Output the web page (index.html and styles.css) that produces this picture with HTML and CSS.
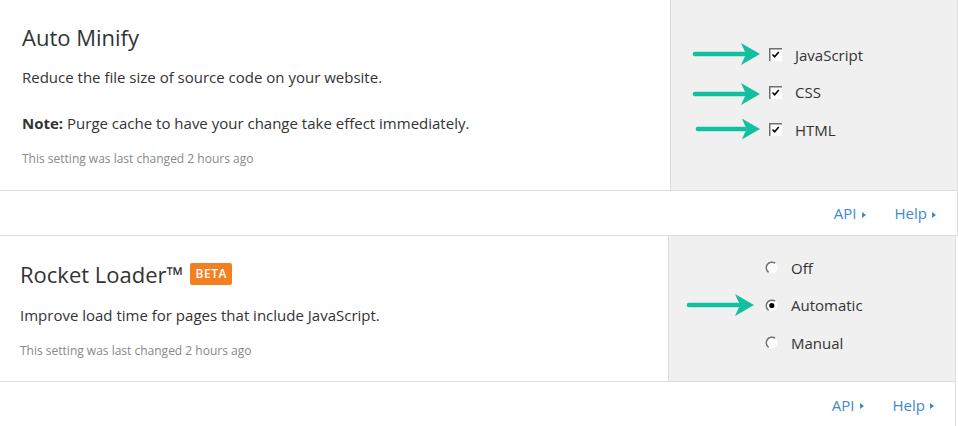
FILE: index.html
```html
<!DOCTYPE html>
<html lang="en">
<head>
<meta charset="utf-8">
<title>Settings</title>
<link rel="stylesheet" href="styles.css">
</head>
<body>
<section class="card">
  <div class="setting">
    <div class="setting-main">
      <h2 class="setting-title">Auto Minify</h2>
      <p class="setting-desc">Reduce the file size of source code on your website.</p>
      <p class="setting-note"><strong>Note:</strong> Purge cache to have your change take effect immediately.</p>
      <p class="setting-meta">This setting was last changed 2 hours ago</p>
    </div>
    <div class="setting-control control-checks">
      <label class="option">
        <svg class="pointer p1" viewBox="0 0 68 24" width="68" height="24"><path d="M3 12H52" class="shaft"/><polygon points="49,1 68,12 49,23 54,12" class="head"/></svg>
        <svg class="check" viewBox="0 0 13 13" width="13" height="13"><rect x="0" y="0" width="13" height="13" fill="#fff"/><path d="M0.75 13V0.75H13" fill="none" stroke="#6f6f6f" stroke-width="1.5"/><path d="M3.5 6.5L5.6 8.8L9.8 4" fill="none" stroke="#000" stroke-width="1.6"/></svg>
        <span>JavaScript</span>
      </label>
      <label class="option">
        <svg class="pointer p2" viewBox="0 0 68 24" width="68" height="24"><path d="M3 12H52" class="shaft"/><polygon points="49,1 68,12 49,23 54,12" class="head"/></svg>
        <svg class="check" viewBox="0 0 13 13" width="13" height="13"><rect x="0" y="0" width="13" height="13" fill="#fff"/><path d="M0.75 13V0.75H13" fill="none" stroke="#6f6f6f" stroke-width="1.5"/><path d="M3.5 6.5L5.6 8.8L9.8 4" fill="none" stroke="#000" stroke-width="1.6"/></svg>
        <span>CSS</span>
      </label>
      <label class="option">
        <svg class="pointer p3" viewBox="0 0 68 24" width="65" height="24"><path d="M3 12H52" class="shaft"/><polygon points="49,1 68,12 49,23 54,12" class="head"/></svg>
        <svg class="check" viewBox="0 0 13 13" width="13" height="13"><rect x="0" y="0" width="13" height="13" fill="#fff"/><path d="M0.75 13V0.75H13" fill="none" stroke="#6f6f6f" stroke-width="1.5"/><path d="M3.5 6.5L5.6 8.8L9.8 4" fill="none" stroke="#000" stroke-width="1.6"/></svg>
        <span>HTML</span>
      </label>
    </div>
  </div>
  <div class="card-footer">
    <a class="footer-link" href="#">API<span class="caret"></span></a>
    <a class="footer-link" href="#">Help<span class="caret"></span></a>
  </div>
</section>

<section class="card card-second">
  <div class="setting">
    <div class="setting-main">
      <h2 class="setting-title">Rocket Loader™ <span class="badge">BETA</span></h2>
      <p class="setting-desc desc-tight">Improve load time for pages that include JavaScript.</p>
      <p class="setting-meta">This setting was last changed 2 hours ago</p>
    </div>
    <div class="setting-control control-radios">
      <label class="option">
        <svg class="radio" viewBox="0 0 13 13" width="13" height="13"><circle cx="6.5" cy="6.5" r="6" fill="#fff"/><path d="M10.2 2.2A5.6 5.6 0 1 0 3.6 11.4" fill="none" stroke="#6f6f6f" stroke-width="1.5"/></svg>
        <span>Off</span>
      </label>
      <label class="option">
        <svg class="pointer p4" viewBox="0 0 68 24" width="70" height="24"><path d="M3 12H52" class="shaft"/><polygon points="49,1 68,12 49,23 54,12" class="head"/></svg>
        <svg class="radio" viewBox="0 0 13 13" width="13" height="13"><circle cx="6.5" cy="6.5" r="6" fill="#fff"/><path d="M10.2 2.2A5.6 5.6 0 1 0 3.6 11.4" fill="none" stroke="#6f6f6f" stroke-width="1.5"/><circle cx="6.8" cy="6.5" r="2.6" fill="#000"/></svg>
        <span>Automatic</span>
      </label>
      <label class="option">
        <svg class="radio" viewBox="0 0 13 13" width="13" height="13"><circle cx="6.5" cy="6.5" r="6" fill="#fff"/><path d="M10.2 2.2A5.6 5.6 0 1 0 3.6 11.4" fill="none" stroke="#6f6f6f" stroke-width="1.5"/></svg>
        <span>Manual</span>
      </label>
    </div>
  </div>
  <div class="card-footer">
    <a class="footer-link" href="#">API<span class="caret"></span></a>
    <a class="footer-link" href="#">Help<span class="caret"></span></a>
  </div>
</section>
</body>
</html>
```

FILE: styles.css
```css
* { box-sizing: border-box; }

html, body {
  margin: 0;
  padding: 0;
  background: #fff;
  font-family: "Open Sans", "Noto Sans", "DejaVu Sans", sans-serif;
  color: #333;
  overflow: hidden;
}

.card {
  width: 958px;
  border-right: 1px solid #ddd;
}

.card-second {
  margin-left: -2px;
  width: 958px;
}

.setting {
  display: flex;
  border-bottom: 1px solid #ddd;
}

.setting-main {
  flex: 1;
  padding: 22px 22px 23px 22px;
}

.card-second .setting-main {
  padding-top: 23px;
  padding-bottom: 22px;
}

.setting-title {
  margin: 0;
  font-size: 22px;
  line-height: 30px;
  font-weight: 400;
  color: #333;
  display: flex;
  align-items: center;
  gap: 7px;
}

.badge {
  display: inline-block;
  background: #f38020;
  color: #fff;
  font-size: 12px;
  font-weight: 600;
  line-height: 22px;
  height: 22px;
  padding: 0 5px;
  border-radius: 2px;
  letter-spacing: 0.6px;
}

.setting-desc {
  margin: 15px 0 0;
  font-size: 15px;
  line-height: 20px;
  color: #333;
}

.desc-tight {
  margin-top: 16px;
}

.setting-note {
  margin: 26px 0 0;
  font-size: 15px;
  line-height: 20px;
  color: #333;
}

.setting-note strong {
  font-weight: 700;
}

.setting-meta {
  margin: 18px 0 0;
  font-size: 12px;
  line-height: 16px;
  color: #888;
}

.setting-control {
  width: 287px;
  flex: none;
  background: #f0f0f0;
  border-left: 1px solid #ddd;
  display: flex;
  flex-direction: column;
}

.control-checks {
  padding: 36px 0 0 98px;
}

.control-radios {
  padding: 13px 0 0 96px;
}

.option {
  position: relative;
  display: flex;
  align-items: center;
  height: 37.5px;
  font-size: 15px;
  color: #333;
}

.check, .radio {
  flex: none;
  display: block;
}

.option span {
  margin-left: 13px;
}

.pointer {
  position: absolute;
  top: 50%;
  display: block;
}

.pointer .shaft {
  stroke: #12bf9f;
  stroke-width: 4.6;
  stroke-linecap: round;
  fill: none;
}

.pointer .head {
  fill: #12bf9f;
}

.p1 { left: -77px; margin-top: -13px; }
.p2 { left: -77px; margin-top: -10px; }
.p3 { left: -74px; margin-top: -13px; }
.p4 { left: -80px; margin-top: -12px; }

.card-footer {
  height: 45px;
  border-bottom: 1px solid #ddd;
  display: flex;
  justify-content: flex-end;
  align-items: center;
  gap: 29px;
  padding-right: 21px;
}

.card-second .card-footer {
  border-bottom: none;
}

.footer-link {
  color: #3d8bc6;
  text-decoration: none;
  font-size: 15px;
  line-height: 20px;
  display: inline-flex;
  align-items: center;
}

.caret {
  display: inline-block;
  width: 0;
  height: 0;
  margin-left: 5px;
  margin-top: 3px;
  border-top: 3.5px solid transparent;
  border-bottom: 3.5px solid transparent;
  border-left: 4px solid #3d8bc6;
}
```
